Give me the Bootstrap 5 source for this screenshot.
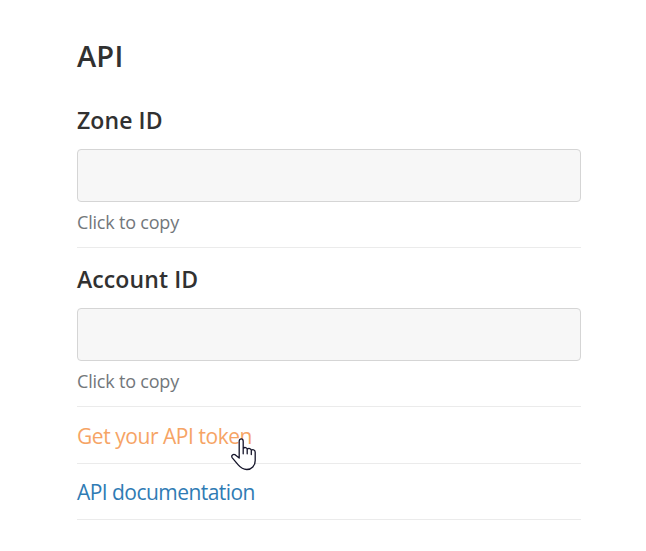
<!DOCTYPE html>
<html lang="en">
<head>
<meta charset="utf-8">
<meta name="viewport" content="width=device-width, initial-scale=1">
<title>API</title>
<link href="https://cdn.jsdelivr.net/npm/bootstrap@5.3.0/dist/css/bootstrap.min.css" rel="stylesheet">
<style>
body{font-family:"Open Sans","Noto Sans",sans-serif;color:#313131;overflow:hidden}
.api-panel{width:504px;margin-left:77px;padding-top:35px}
.panel-title{font-size:29px;line-height:42px;font-weight:600;letter-spacing:.2px}
.field-title{font-size:23px;line-height:32px;font-weight:600;letter-spacing:.1px}
.id-box{height:53px;margin-top:13px;background:#f7f7f7;border:1px solid #d5d5d5;border-radius:4px}
.hint{font-size:18px;line-height:26px;margin-top:7px;color:#72777b;letter-spacing:-.2px}
.rule{border-bottom:1px solid #ebebeb}
.zone{height:144px;margin-top:27px}
.account{height:159px;padding-top:15px}
.link-row{font-size:21px;line-height:30px;letter-spacing:-.45px}
.token-row{height:57px;padding-top:14px}
.docs-row{height:56px;padding-top:13px;letter-spacing:-.55px}
.token{color:#f6a465}
.docs{color:#2f7bb4}
.pointer{left:154px;top:31px}
</style>
</head>
<body class="bg-white">
<main class="api-panel">
  <h1 class="panel-title mb-0">API</h1>
  <section class="zone rule">
    <h2 class="field-title mb-0">Zone ID</h2>
    <div class="id-box"></div>
    <div class="hint">Click to copy</div>
  </section>
  <section class="account rule">
    <h2 class="field-title mb-0">Account ID</h2>
    <div class="id-box"></div>
    <div class="hint">Click to copy</div>
  </section>
  <div class="link-row token-row rule position-relative">
    <a href="#" class="token text-decoration-none">Get your API token</a>
    <svg class="pointer position-absolute" width="26" height="33" viewBox="0 0 26 33" aria-hidden="true">
      <path d="M8.2 20V3.2C8.2 .1 12.2 .1 12.2 3.2V10.5C13.3 8.9 16 9.4 16.2 11.2C17.7 9.9 20 10.4 20.3 12.2C22.1 11.1 24.2 12 24.2 14.2V22.4C24.2 27.8 20.6 31.5 15.8 31.5C11.8 31.5 9.4 29.5 7 26.6L1.3 19.8C-.3 17.6 2.3 15.6 4.4 16.9L8.2 20ZM12.2 10V15.8M16.2 11V15.8M20.3 12V16.5" fill="#fff" stroke="#15152a" stroke-width="1.3" stroke-linejoin="round" stroke-linecap="round"/>
    </svg>
  </div>
  <div class="link-row docs-row rule">
    <a href="#" class="docs text-decoration-none">API documentation</a>
  </div>
</main>
<script src="https://cdn.jsdelivr.net/npm/bootstrap@5.3.0/dist/js/bootstrap.bundle.min.js"></script>
</body>
</html>
